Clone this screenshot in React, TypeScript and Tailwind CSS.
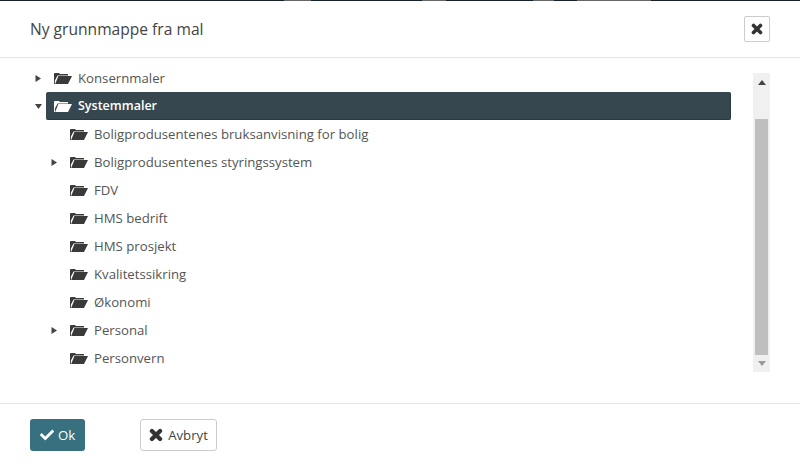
import React from "react";
import { FaCheck } from "react-icons/fa";

type Node = { label: string; level: number; arrow?: "right" | "down"; selected?: boolean };

const nodes: Node[] = [
  { label: "Konsernmaler", level: 0, arrow: "right" },
  { label: "Systemmaler", level: 0, arrow: "down", selected: true },
  { label: "Boligprodusentenes bruksanvisning for bolig", level: 1 },
  { label: "Boligprodusentenes styringssystem", level: 1, arrow: "right" },
  { label: "FDV", level: 1 },
  { label: "HMS bedrift", level: 1 },
  { label: "HMS prosjekt", level: 1 },
  { label: "Kvalitetssikring", level: 1 },
  { label: "Økonomi", level: 1 },
  { label: "Personal", level: 1, arrow: "right" },
  { label: "Personvern", level: 1 },
];

const Arrow: React.FC<{ dir?: "right" | "down" }> = ({ dir }) => (
  <span className="w-[16px] shrink-0 flex justify-center">
    {dir && (
      <svg width="11" height="11" viewBox="0 0 11 11" className="text-[#444]">
        {dir === "right" ? <path d="M2.5 2 L8 5.5 L2.5 9 Z" fill="currentColor" /> : <path d="M2 3 H9 L5.5 8 Z" fill="currentColor" />}
      </svg>
    )}
  </span>
);

const FolderOpen: React.FC<{ className?: string }> = ({ className }) => (
  <svg width="18" height="11" viewBox="0 0 18 11" className={`mt-[1px] ml-[8px] mr-[6px] shrink-0 ${className ?? ""}`}>
    <path d="M0 11 V1 Q0 0 1 0 H5 L6 1 H14 V2.4 H3.6 L0.9 7.5 V11 Z" fill="currentColor" />
    <path d="M4.4 3.1 H18 L14 11 H1.2 Z" fill="currentColor" />
  </svg>
);

const CrossIcon: React.FC<{ size: number }> = ({ size }) => (
  <svg width={size} height={size} viewBox="0 0 12 12" className="shrink-0 text-[#333]">
    <path d="M2.5 2.5 L9.5 9.5 M9.5 2.5 L2.5 9.5" stroke="currentColor" strokeWidth="3.6" strokeLinecap="round" />
  </svg>
);

const TreeRow: React.FC<{ node: Node }> = ({ node }) => (
  <div className={`h-[28px] flex items-center ${node.level === 1 ? "pl-[16px]" : ""}`}>
    <Arrow dir={node.arrow} />
    {node.selected ? (
      <div className="flex-1 h-[28px] flex items-center rounded-[2px] bg-[#37474f] border-b border-r border-[#2b3a41] text-white">
        <FolderOpen />
        <span className="text-[12.5px] font-semibold pt-[2px]">{node.label}</span>
      </div>
    ) : (
      <div className="flex items-center text-[#555]">
        <FolderOpen className="text-[#3a3a3a]" />
        <span className="text-[13.2px] pt-[2px]">{node.label}</span>
      </div>
    )}
  </div>
);

export default function App() {
  return (
    <div className="w-[800px] h-[465px] flex flex-col bg-white overflow-hidden font-['Open_Sans',sans-serif]">
      <div className="h-[1px] shrink-0 bg-[#17212a] flex">
        <div className="w-[284px]" />
        <div className="w-[27px] bg-[#666]" />
        <div className="w-[111px]" />
        <div className="w-[24px] bg-[#666]" />
        <div className="w-[87px]" />
        <div className="w-[21px] bg-[#666]" />
        <div className="w-[23px]" />
        <div className="w-[74px] bg-[#666]" />
      </div>
      <header className="h-[57px] shrink-0 flex items-center justify-between pl-[30px] pr-[30px] border-b border-[#e5e5e5]">
        <h1 className="text-[15.6px] text-[#444] pt-[1px]">Ny grunnmappe fra mal</h1>
        <button className="w-[26px] h-[26px] flex items-center justify-center rounded-[2px] border border-[#ccc] mt-[-1px]">
          <CrossIcon size={12} />
        </button>
      </header>
      <main className="flex-1 flex pl-[30px] pr-[30px]">
        <div className="w-[701px] pt-[6px]">
          {nodes.map(n => (
            <TreeRow key={n.label} node={n} />
          ))}
        </div>
        <div className="ml-[22px] mt-[15px] w-[17px] h-[299px] bg-[#f0f0f0] flex flex-col items-center">
          <div className="h-[46px] w-full flex justify-center pt-[7px]">
            <svg width="8" height="5" viewBox="0 0 8 5"><path d="M0 5 L4 0 L8 5 Z" fill="#444" /></svg>
          </div>
          <div className="w-[13px] h-[236px] bg-[#bfbfbf]" />
          <div className="flex-1 w-full flex justify-center pt-[6px]">
            <svg width="8" height="5" viewBox="0 0 8 5"><path d="M0 0 L4 5 L8 0 Z" fill="#999" /></svg>
          </div>
        </div>
      </main>
      <footer className="h-[62px] shrink-0 border-t border-[#e5e5e5] pl-[30px] pt-[15px] flex items-start">
        <button className="w-[55px] h-[32px] flex items-center justify-center gap-[4px] rounded-[3px] bg-[#37717f] text-white text-[13.2px]">
          <FaCheck size={14} />
          <span className="pt-[1px]">Ok</span>
        </button>
        <button className="ml-[55px] w-[77px] h-[32px] flex items-center justify-center gap-[5px] rounded-[3px] border border-[#ccc] text-[#444] text-[13.2px]">
          <CrossIcon size={14} />
          <span className="pt-[1px]">Avbryt</span>
        </button>
      </footer>
    </div>
  );
}
